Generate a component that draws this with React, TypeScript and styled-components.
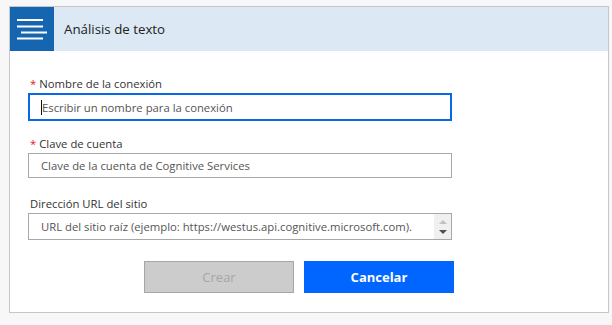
import React from "react";
import styled, { createGlobalStyle } from "styled-components";

const GlobalStyle = createGlobalStyle`
  html, body {
    margin: 0;
    padding: 0;
    background: #f7f7f7;
    font-family: "Segoe UI", "Open Sans", sans-serif;
  }
`;

const Page = styled.div`
  padding: 6px 0 0 9px;
`;

const Card = styled.div`
  width: 598px;
  height: 305px;
  border: 1px solid #c6c6c6;
  background: #ffffff;
  display: flex;
  flex-direction: column;
`;

const Header = styled.div`
  height: 44px;
  display: flex;
  align-items: center;
  background: #dce8f3;
`;

const IconBox = styled.div`
  width: 44px;
  height: 44px;
  background: #1565b0;
  display: flex;
  align-items: center;
  justify-content: center;
`;

const Title = styled.div`
  margin-left: 10px;
  font-size: 13.3px;
  color: #222;
`;

const Form = styled.div`
  padding: 24px 0 0 18px;
  display: flex;
  flex-direction: column;
`;

const Field = styled.div<{ $top: number }>`
  margin-top: ${(p) => p.$top}px;
  display: flex;
  flex-direction: column;
  gap: 1px;
  width: 424px;
`;

const Label = styled.div`
  height: 17px;
  line-height: 17px;
  font-size: 11.3px;
  color: #333;
  padding-left: 2px;
  display: flex;
  align-items: center;
`;

const Star = styled.span`
  color: #e0201f;
  margin-right: 3px;
`;

const Box = styled.div<{ $focus?: boolean; $h: number }>`
  height: ${(p) => p.$h}px;
  box-sizing: border-box;
  border: ${(p) => (p.$focus ? "2px solid #0a68e6" : "1px solid #a8a8a8")};
  display: flex;
  align-items: center;
  padding-left: ${(p) => (p.$focus ? 11 : 12)}px;
  background: #fff;
`;

const Caret = styled.span`
  width: 1px;
  height: 15px;
  background: #111;
`;

const TextInput = styled.input`
  flex: 1;
  border: none;
  outline: none;
  padding: 0;
  font-family: inherit;
  font-size: 11.3px;
  color: #444;
  background: transparent;
  &::placeholder {
    color: #555;
    opacity: 1;
  }
`;

const AreaText = styled.textarea`
  flex: 1;
  height: 100%;
  box-sizing: border-box;
  border: none;
  outline: none;
  resize: none;
  padding: 5px 0 0;
  font-family: inherit;
  font-size: 11.3px;
  line-height: 16px;
  white-space: pre;
  overflow: hidden;
  background: transparent;
  &::placeholder {
    color: #555;
    opacity: 1;
  }
`;

const Gutter = styled.div`
  width: 17px;
  align-self: stretch;
  background: #f0f0f0;
  display: flex;
  flex-direction: column;
  align-items: center;
  justify-content: center;
  gap: 6px;
`;

const Arrow = styled.div<{ $up?: boolean }>`
  width: 0;
  height: 0;
  border-left: 4px solid transparent;
  border-right: 4px solid transparent;
  ${(p) =>
    p.$up
      ? "border-bottom: 4px solid #c2c2c2;"
      : "border-top: 4px solid #505050;"}
`;

const ButtonRow = styled.div`
  margin-top: 21px;
  width: 426px;
  display: flex;
  justify-content: flex-end;
  gap: 10px;
`;

const Button = styled.button<{ $primary?: boolean }>`
  width: 150px;
  height: 32px;
  box-sizing: border-box;
  font-family: inherit;
  font-size: 13px;
  font-weight: ${(p) => (p.$primary ? 700 : 400)};
  color: ${(p) => (p.$primary ? "#fff" : "#a6a6a6")};
  background: ${(p) => (p.$primary ? "#0066ff" : "#cccccc")};
  border: ${(p) => (p.$primary ? "none" : "1px solid #a6a6a6")};
  padding: 0;
`;

const MenuIcon = () => (
  <svg width="44" height="44" viewBox="0 0 44 44">
    <g fill="#fff">
      <rect x="7" y="12" width="26" height="2" />
      <rect x="7" y="18.5" width="26" height="2" />
      <rect x="11" y="24.5" width="26" height="2" />
      <rect x="7" y="30.5" width="26" height="2" />
    </g>
  </svg>
);

const App = () => {
  return (
    <>
      <GlobalStyle />
      <Page>
        <Card>
          <Header>
            <IconBox>
              <MenuIcon />
            </IconBox>
            <Title>Análisis de texto</Title>
          </Header>
          <Form>
            <Field $top={0}>
              <Label>
                <Star>*</Star>Nombre de la conexión
              </Label>
              <Box $focus $h={28}>
                <Caret />
                <TextInput
                  readOnly
                  placeholder="Escribir un nombre para la conexión"
                />
              </Box>
            </Field>
            <Field $top={14}>
              <Label>
                <Star>*</Star>Clave de cuenta
              </Label>
              <Box $h={25}>
                <TextInput
                  readOnly
                  placeholder="Clave de la cuenta de Cognitive Services"
                />
              </Box>
            </Field>
            <Field $top={17}>
              <Label>Dirección URL del sitio</Label>
              <Box $h={27}>
                <AreaText
                  readOnly
                  wrap="off"
                  placeholder="URL del sitio raíz (ejemplo: https://westus.api.cognitive.microsoft.com)."
                />
                <Gutter>
                  <Arrow $up />
                  <Arrow />
                </Gutter>
              </Box>
            </Field>
            <ButtonRow>
              <Button disabled>Crear</Button>
              <Button $primary>Cancelar</Button>
            </ButtonRow>
          </Form>
        </Card>
      </Page>
    </>
  );
};

export default App;
